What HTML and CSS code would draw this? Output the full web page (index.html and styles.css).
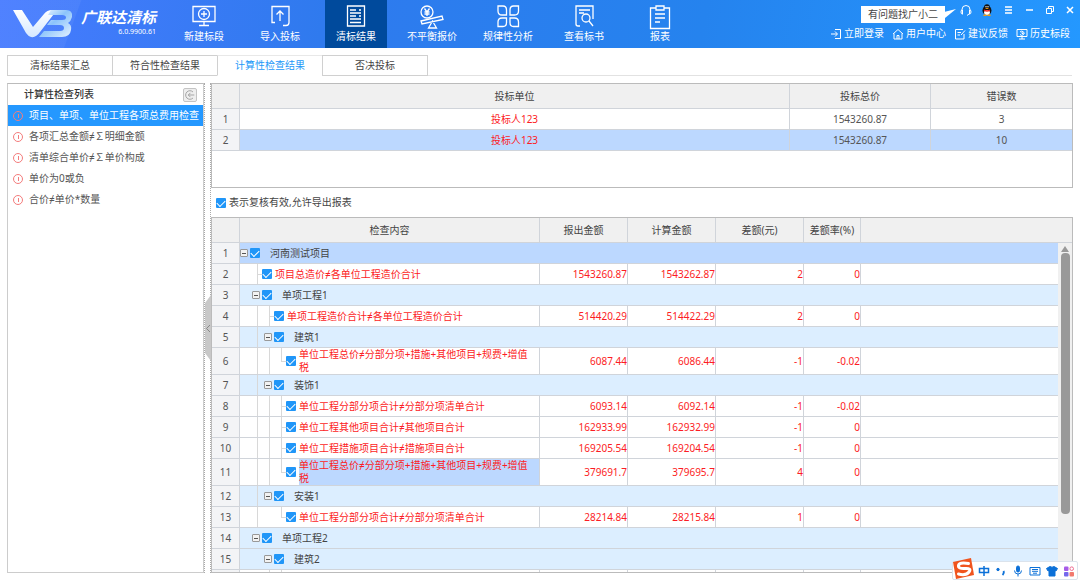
FILE: index.html
```html
<!DOCTYPE html>
<html lang="zh-CN">
<head>
<meta charset="utf-8">
<title>广联达清标</title>
<link rel="stylesheet" href="styles.css">
</head>
<body>
<div class="app">
  <header class="topbar">
    <div class="brand">
      <svg class="logo" viewBox="0 0 60 28" aria-hidden="true">
        <defs>
          <linearGradient id="lg1" x1="0" y1="0" x2="0" y2="1"><stop offset="0" stop-color="#fff"/><stop offset="1" stop-color="#d5e8ff"/></linearGradient>
          <linearGradient id="lg2" x1="0" y1="0" x2="1" y2="1"><stop offset="0" stop-color="#fff"/><stop offset=".45" stop-color="#8cc4fb"/><stop offset="1" stop-color="#e6f2ff"/></linearGradient>
        </defs>
        <path fill="url(#lg1)" d="M0 0h9l11 17L31 4q3-4 8-4h5L27 22q-4 6-9 5-3-1-5-4z"/>
        <path fill="url(#lg2)" d="M38 0h15q7 0 6 7-1 4-4 6 4 2 3 7-1 7-9 7H26l5-6h16q4 0 4-3t-4-3H34l4-5h11q4 0 4-2.500t-4-2.500H35z"/>
      </svg>
      <div class="brand-text">
        <strong class="brand-name">广联达清标</strong>
        <span class="version">6.0.9900.61</span>
      </div>
    </div>
    <nav class="nav">
      <button class="nav-item"><svg viewBox="0 0 26 26"><path d="M2 2.500h22v15H2zM13 17.500v4M8 21.500h10"/><circle cx="13" cy="10" r="5.500"/><path d="M13 7v6M10 10h6"/></svg>新建标段</button>
      <button class="nav-item"><svg viewBox="0 0 26 26"><path d="M8 18.500H5V2.500h17v16q0 3-3 3h-3M13 17V7M9.500 10.500L13 7l3.500 3.500"/></svg>导入投标</button>
      <button class="nav-item active"><svg viewBox="0 0 26 26"><path d="M4.500 2h17v20h-17zM7 6h6M7 9h11M7 12h6M7 15h11M7 18.500h11M16 6h2M16 12h2"/></svg>清标结果</button>
      <button class="nav-item"><svg viewBox="0 0 26 26"><circle cx="8" cy="8" r="6"/><path d="M5.500 4.500L8 8l2.500-3.500M8 8v4M5.500 8h5M5.500 10h5M2 17l21-5 1 3.500L3 20zM13.500 17l-4 7h8z"/></svg>不平衡报价</button>
      <button class="nav-item"><svg viewBox="0 0 26 26"><path d="M3 2h5q3.500 0 3.500 4v5H7q-4 0-4-4zM23.500 2h-5Q15 2 15 6v5h4.500q4 0 4-4zM3 22.500h5q3.500 0 3.500-4v-4.500H7q-4 0-4 4zM23.500 22.500h-5q-3.500 0-3.500-4v-4.500h4.500q4 0 4 4z"/></svg>规律性分析</button>
      <button class="nav-item"><svg viewBox="0 0 26 26"><path d="M9 22H7q-2 0-2-2V2h17v13M8 6h11M8 9h5"/><circle cx="15" cy="14" r="4"/><path d="M18 17l4 5"/></svg>查看标书</button>
      <button class="nav-item"><svg viewBox="0 0 26 26"><path d="M9 4H3.500v20.500h19V4H17M9 2h8v4H9zM8 10h10M8 14h10M8 18h5"/></svg>报表</button>
    </nav>
    <div class="tools">
      <div class="tools-row">
        <span class="bubble">有问题找广小二</span>
        <button class="tool" aria-label="客服"><svg viewBox="0 0 12 12"><path d="M2 7V5.500a4 4 0 0 1 8 0V7M2 6q-1 0-1 2t1.500 2.200V6zM10 6q1 0 1 2t-1.500 2.200V6zM9 10l-2 1.500"/></svg></button>
        <button class="tool" aria-label="QQ"><svg viewBox="0 0 12 12"><g stroke="none"><ellipse cx="6" cy="6.500" rx="4.500" ry="4.500" fill="#121212"/><ellipse cx="6" cy="3.500" rx="2.900" ry="3.300" fill="#121212"/><ellipse cx="6" cy="8.500" rx="2.900" ry="2.500" fill="#fff"/><path fill="#e22" d="M3 5.500q3 1.500 6 0v1.500q-3 1.500-6 0z"/><ellipse cx="4" cy="11.200" rx="2" ry=".8" fill="#f90"/><ellipse cx="8" cy="11.200" rx="2" ry=".8" fill="#f90"/><circle cx="5" cy="2.800" r=".7" fill="#fff"/><circle cx="7" cy="2.800" r=".7" fill="#fff"/><ellipse cx="6" cy="4.500" rx="1.700" ry=".6" fill="#f90"/></g></svg></button>
        <button class="tool" aria-label="菜单"><svg viewBox="0 0 12 12"><path stroke-width="1.500" d="M3 3h7M3 6h7M3 9h7"/></svg></button>
        <button class="tool" aria-label="最小化"><svg viewBox="0 0 12 12"><path stroke-width="1.500" d="M3 6h7"/></svg></button>
        <button class="tool" aria-label="还原"><svg viewBox="0 0 12 12"><path d="M2.500 4.500h5v5h-5zM4.500 4V2.500h5v5H8"/></svg></button>
        <button class="tool" aria-label="关闭"><svg viewBox="0 0 12 12"><path stroke-width="1.500" d="M2 3l6 6M8 3L2 9"/></svg></button>
      </div>
      <div class="tools-row links">
        <a href="#"><svg viewBox="0 0 12 12"><path d="M5 1.500h5.500v9H5M1 6h6M5 3.500L7.500 6 5 8.500"/></svg>立即登录</a>
        <a href="#"><svg viewBox="0 0 12 12"><path d="M1 6l5-4.500L11 6M2 5.500V11h8V5.500M5 11V7.500h2V11"/></svg>用户中心</a>
        <a href="#"><svg viewBox="0 0 12 12"><path d="M10 6v5H1.500V1.500H9M3.500 4.500H7M3.500 7H6M7 7l4-4.500"/></svg>建议反馈</a>
        <a href="#"><svg viewBox="0 0 12 12"><path d="M1 1.500h10v7H1zM3 11h6M6 8.500V11M4 4a2.300 2 0 1 1 0 2.500M6 4v1.500h1.500"/></svg>历史标段</a>
      </div>
    </div>
  </header>

  <div class="tabs">
    <button class="tab">清标结果汇总</button>
    <button class="tab">符合性检查结果</button>
    <button class="tab active">计算性检查结果</button>
    <button class="tab">否决投标</button>
  </div>

  <main class="workspace">
    <aside class="side">
      <div class="side-head">
        <h2>计算性检查列表</h2>
        <button class="collapse" aria-label="收起"><svg viewBox="0 0 14 14"><path d="M10.500 3.500a5 5 0 1 0 0 7M12 7H5M7.500 4.500L5 7l2.500 2.500"/></svg></button>
      </div>
      <ul class="checks">
        <li class="selected"><i class="warn"></i>项目、单项、单位工程各项总费用检查</li>
        <li><i class="warn"></i>各项汇总金额≠∑明细金额</li>
        <li><i class="warn"></i>清单综合单价≠∑单价构成</li>
        <li><i class="warn"></i>单价为0或负</li>
        <li><i class="warn"></i>合价≠单价*数量</li>
      </ul>
    </aside>
    <div class="splitter"><button class="grip" aria-label="折叠侧栏"><svg viewBox="0 0 6 66"><path fill="#c8c8c8" d="M6 0v66L0 58V8z"/><path fill="none" stroke="#888" d="M5 30L1.500 33.500 5 37"/></svg></button></div>

    <section class="content">
      <div class="panel bidders">
        <table class="grid">
          <colgroup><col class="c-num"><col><col class="c-total"><col class="c-total"></colgroup>
          <thead><tr><th></th><th>投标单位</th><th>投标总价</th><th>错误数</th></tr></thead>
          <tbody>
            <tr><th>1</th><td class="err">投标人123</td><td>1543260.87</td><td>3</td></tr>
            <tr class="current"><th>2</th><td class="err">投标人123</td><td>1543260.87</td><td>10</td></tr>
          </tbody>
        </table>
      </div>
      <label class="review"><input type="checkbox" checked>表示复核有效,允许导出报表</label>
      <div class="panel details">
        <table class="grid">
          <colgroup><col class="c-num"><col class="c-item"><col class="c-money"><col class="c-money"><col class="c-money"><col class="c-rate"><col></colgroup>
          <thead><tr><th></th><th>检查内容</th><th>报出金额</th><th>计算金额</th><th>差额(元)</th><th>差额率(%)</th><th></th></tr></thead>
          <tbody>
            <tr class="current"><th>1</th><td colspan="6"><div class="tree group"><button class="toggle" aria-label="折叠"></button><label><input type="checkbox" checked><span>河南测试项目</span></label></div></td></tr>
            <tr class="leaf"><th>2</th><td><div class="tree"><i class="gap"></i><i class="elbow on"></i><label><input type="checkbox" checked><span>项目总造价≠各单位工程造价合计</span></label></div></td><td>1543260.87</td><td>1543262.87</td><td>2</td><td>0</td><td></td></tr>
            <tr class="branch"><th>3</th><td colspan="6"><div class="tree group"><i class="gap"></i><button class="toggle" aria-label="折叠"></button><label><input type="checkbox" checked><span>单项工程1</span></label></div></td></tr>
            <tr class="leaf"><th>4</th><td><div class="tree"><i class="gap"></i><i class="gap line"></i><i class="elbow on"></i><label><input type="checkbox" checked><span>单项工程造价合计≠各单位工程造价合计</span></label></div></td><td>514420.29</td><td>514422.29</td><td>2</td><td>0</td><td></td></tr>
            <tr class="branch"><th>5</th><td colspan="6"><div class="tree group"><i class="gap"></i><i class="gap line"></i><button class="toggle" aria-label="折叠"></button><label><input type="checkbox" checked><span>建筑1</span></label></div></td></tr>
            <tr class="leaf"><th>6</th><td><div class="tree"><i class="gap"></i><i class="gap line"></i><i class="gap line"></i><i class="elbow"></i><label><input type="checkbox" checked><span>单位工程总价≠分部分项+措施+其他项目+规费+增值税</span></label></div></td><td>6087.44</td><td>6086.44</td><td>-1</td><td>-0.02</td><td></td></tr>
            <tr class="branch"><th>7</th><td colspan="6"><div class="tree group"><i class="gap"></i><i class="gap line"></i><button class="toggle" aria-label="折叠"></button><label><input type="checkbox" checked><span>装饰1</span></label></div></td></tr>
            <tr class="leaf"><th>8</th><td><div class="tree"><i class="gap"></i><i class="gap line"></i><i class="gap line"></i><i class="elbow on"></i><label><input type="checkbox" checked><span>单位工程分部分项合计≠分部分项清单合计</span></label></div></td><td>6093.14</td><td>6092.14</td><td>-1</td><td>-0.02</td><td></td></tr>
            <tr class="leaf"><th>9</th><td><div class="tree"><i class="gap"></i><i class="gap line"></i><i class="gap line"></i><i class="elbow on"></i><label><input type="checkbox" checked><span>单位工程其他项目合计≠其他项目合计</span></label></div></td><td>162933.99</td><td>162932.99</td><td>-1</td><td>0</td><td></td></tr>
            <tr class="leaf"><th>10</th><td><div class="tree"><i class="gap"></i><i class="gap line"></i><i class="gap line"></i><i class="elbow on"></i><label><input type="checkbox" checked><span>单位工程措施项目合计≠措施项目合计</span></label></div></td><td>169205.54</td><td>169204.54</td><td>-1</td><td>0</td><td></td></tr>
            <tr class="leaf"><th>11</th><td><div class="tree"><i class="gap"></i><i class="gap line"></i><i class="gap line"></i><i class="elbow"></i><label><input type="checkbox" checked><span class="focus">单位工程总价≠分部分项+措施+其他项目+规费+增值税</span></label></div></td><td>379691.7</td><td>379695.7</td><td>4</td><td>0</td><td></td></tr>
            <tr class="branch"><th>12</th><td colspan="6"><div class="tree group"><i class="gap"></i><i class="gap line"></i><button class="toggle" aria-label="折叠"></button><label><input type="checkbox" checked><span>安装1</span></label></div></td></tr>
            <tr class="leaf"><th>13</th><td><div class="tree"><i class="gap"></i><i class="gap line"></i><i class="gap"></i><i class="elbow"></i><label><input type="checkbox" checked><span>单位工程分部分项合计≠分部分项清单合计</span></label></div></td><td>28214.84</td><td>28215.84</td><td>1</td><td>0</td><td></td></tr>
            <tr class="branch"><th>14</th><td colspan="6"><div class="tree group"><i class="gap"></i><button class="toggle" aria-label="折叠"></button><label><input type="checkbox" checked><span>单项工程2</span></label></div></td></tr>
            <tr class="branch"><th>15</th><td colspan="6"><div class="tree group"><i class="gap"></i><i class="gap"></i><button class="toggle" aria-label="折叠"></button><label><input type="checkbox" checked><span>建筑2</span></label></div></td></tr>
            <tr class="leaf"><th></th><td><div class="tree"><i class="gap"></i><i class="gap"></i><i class="gap line"></i><i class="elbow on"></i></div></td><td></td><td></td><td></td><td></td><td></td></tr>
          </tbody>
        </table>
        <div class="scrollbar"><i class="arrow"></i><i class="thumb"></i></div>
      </div>
    </section>
  </main>

  <div class="ime">
    <svg class="ime-logo" viewBox="0 0 22 22"><path fill="#f0541e" d="M1 4L19 0l3 17L4 21z"/><path fill="none" stroke="#fff" stroke-width="3" stroke-linecap="round" d="M16.500 5.500Q7 4 6.500 7.500T13 10.500t4 3.500T6.500 16"/></svg>
    <svg viewBox="0 0 12 12"><path stroke-width="1.500" d="M1.500 3.500h9v4h-9zM6 1v10"/></svg>
    <svg viewBox="0 0 12 12"><circle cx="3" cy="4.500" r="1.200" fill="#0b70d8"/><path stroke-width="1.800" d="M8.500 6q1 2-1 4"/></svg>
    <svg viewBox="0 0 12 12"><rect x="4.500" y="1" width="3" height="6" rx="1.500" fill="#0b70d8"/><path d="M2.500 5.500q0 3.500 3.500 3.500t3.500-3.500M6 9v2.500"/></svg>
    <svg viewBox="0 0 12 12"><path d="M1 2.500h10v7.500H1zM3 4.500h6M3 6.300h6M4 8.200h4"/></svg>
    <svg viewBox="0 0 12 12"><path fill="#0b70d8" d="M4 1.500q2 1.500 4 0l3.500 2L10 6l-1-.5V11H3V5.500L2 6 .5 3.500z"/></svg>
    <svg viewBox="0 0 12 12"><g stroke="none"><rect x="1" y="1.500" width="4.500" height="4.500" rx="1" fill="#a65be8"/><rect x="1" y="7" width="4.500" height="4.500" rx="1" fill="#7467ec"/><rect x="6.500" y="7" width="4.500" height="4.500" rx="1" fill="#f27a6e"/></g><circle cx="8.700" cy="3.700" r="1.800" stroke="#ef6d92"/></svg>
  </div>
</div>
</body>
</html>
```
FILE: styles.css
```css
* { box-sizing: border-box; }

body {
  margin: 0;
  background: #fff;
  color: #555;
  font: 10px/13px "Noto Sans", "Noto Sans CJK SC", sans-serif;
}

button {
  margin: 0;
  padding: 0;
  border: 0;
  background: none;
  color: inherit;
  font: inherit;
}

svg {
  display: block;
  flex: none;
}

.app {
  display: flex;
  flex-direction: column;
  height: 100vh;
}

/* Top bar */
.topbar {
  display: flex;
  flex: none;
  height: 48px;
  color: #fff;
  background:
    linear-gradient(110deg, rgba(255, 255, 255, 0.05) 76px, transparent 77px),
    linear-gradient(100deg, #477bff 0%, #2f7aee 30%, #2583ee 65%, #2498ff 100%);
}

.topbar svg,
.ime svg {
  fill: none;
  stroke: currentColor;
}

.brand {
  display: flex;
  flex: none;
  gap: 8px;
  width: 173px;
  padding: 10px 0 0 13px;
}

.topbar .logo {
  width: 60px;
  height: 28px;
  stroke: none;
}

.brand-text {
  display: flex;
  flex-direction: column;
  align-items: flex-end;
}

.brand-name {
  font-size: 15px;
  line-height: 15px;
  font-style: italic;
}

.version {
  font-size: 7px;
}

.nav {
  display: flex;
  gap: 14px;
}

.nav-item {
  display: flex;
  flex-direction: column;
  align-items: center;
  width: 62px;
  padding-top: 4px;
  white-space: nowrap;
}

.nav-item svg {
  width: 26px;
  height: 26px;
  stroke-width: 1.3;
}

.nav-item.active {
  background: #004a9c;
}

.tools {
  display: flex;
  flex-direction: column;
  align-items: flex-end;
  gap: 4px;
  margin-left: auto;
  padding: 6px 10px 0 0;
}

.tools-row {
  display: flex;
  gap: 9px;
}

.tools-row.links {
  gap: 8px;
}

.tool svg,
.links svg {
  width: 12px;
  height: 12px;
}

.tools-row:first-child {
  margin-right: -7px;
  height: 17px;
}

.tool {
  height: 8px;
  display: flex;
  align-items: center;
}

.bubble {
  position: relative;
  width: 84px;
  margin-right: 6px;
  background: #fff;
  color: #444;
  line-height: 17px;
  text-align: center;
}

.bubble::after {
  content: "";
  position: absolute;
  left: 100%;
  top: 3px;
  width: 11px;
  height: 9px;
  background: #fff;
  clip-path: polygon(0 30%, 100% 0, 0 100%);
}

.links a {
  display: flex;
  align-items: center;
  gap: 2px;
  color: #fff;
  text-decoration: none;
}

/* Tabs */
.tabs {
  display: flex;
  flex: none;
  margin: 7px 8px 0 7px;
  border-bottom: 1px solid #e2e2e2;
}

.tab {
  width: 106px;
  height: 21px;
  margin: 0 0 -1px -1px;
  border: 1px solid #d0d0d0;
  background: #fff;
  color: #444;
}

.tab:first-child {
  margin-left: 0;
}

.tab.active {
  border-color: #e8e8e8 #d0d0d0 #fff;
  color: #2498f8;
}

/* Workspace */
.workspace {
  display: flex;
  flex: 1;
  min-height: 0;
  margin: 7px;
}

.side {
  flex: none;
  width: 197px;
  border: 1px solid #ccc;
  border-top-color: #bbb;
}

.side-head {
  display: flex;
  align-items: center;
  justify-content: space-between;
  height: 21px;
  padding: 0 6px 0 16px;
}

.side-head h2 {
  margin: 0;
  color: #333;
  font-size: 10px;
  font-weight: 500;
}

.collapse {
  width: 14px;
  height: 14px;
  border: 1px solid #c4c4c4;
  border-radius: 2px;
  background: #eee;
}

.collapse svg {
  width: 12px;
  height: 12px;
  fill: none;
  stroke: #999;
}

.checks {
  margin: 0;
  padding: 0;
  list-style: none;
}

.checks li {
  display: flex;
  align-items: center;
  gap: 6px;
  height: 21px;
  padding-left: 5px;
  white-space: nowrap;
}

.checks .selected {
  background: #2498ff;
  color: #fff;
}

.warn {
  display: flex;
  justify-content: center;
  width: 10px;
  height: 10px;
  border: 1px solid #f47c7c;
  border-radius: 50%;
}

.warn::before {
  content: "";
  width: 1px;
  height: 4px;
  margin-top: 2px;
  background: #f47c7c;
}

.splitter {
  display: flex;
  flex: none;
  align-items: center;
  width: 7px;
  border-left: 1px dotted #aaa;
  border-right: 1px dotted #aaa;
}

.grip svg {
  width: 6px;
  height: 66px;
}

.content {
  display: flex;
  flex: 1;
  flex-direction: column;
  min-width: 0;
}

.panel {
  border: 1px solid #bbb;
  overflow: hidden;
}

.bidders {
  flex: none;
  height: 105px;
}

.details {
  position: relative;
  flex: 1;
  min-height: 0;
}

.review {
  display: flex;
  flex: none;
  align-items: center;
  gap: 3px;
  height: 29px;
  padding-left: 5px;
  color: #444;
}

input[type="checkbox"] {
  appearance: none;
  display: flex;
  flex: none;
  justify-content: center;
  width: 10px;
  height: 10px;
  margin: 0;
  border-radius: 1px;
  background: #2096f8;
}

input[type="checkbox"]:checked::before {
  content: "";
  width: 7px;
  height: 4px;
  margin-top: 2px;
  border: solid #fff;
  border-width: 0 0 1px 1px;
  transform: rotate(-45deg);
}

/* Data grids */
.grid {
  width: 100%;
  border-spacing: 0;
  table-layout: fixed;
}

.c-num { width: 28px; }
.c-total { width: 141px; }
.c-item { width: 300px; }
.c-money { width: 88px; }
.c-rate { width: 57px; }

.grid th,
.grid td {
  padding: 0;
  border: solid #d0d4da;
  border-width: 0 1px 1px 0;
  text-align: center;
}

.grid th {
  font-weight: 400;
}

.grid tr > :last-child {
  border-right: 0;
}

.grid thead tr {
  height: 25px;
}

.grid thead th {
  background: #f0f0f0;
  color: #444;
}

.grid tbody tr {
  height: 21px;
}

.grid tbody th {
  background: #f3f4f6;
}

.grid .err,
.grid .leaf td {
  color: #fc1c24;
}

.grid .leaf td {
  text-align: right;
}

.current td {
  background: #bcd8ff;
}

.branch td {
  background: #dceeff;
}

.tree {
  display: flex;
  min-height: 20px;
  text-align: left;
}

.tree label {
  display: flex;
  flex: 1;
  align-items: center;
  gap: 3px;
}

.tree label span {
  flex: 1;
  padding-right: 4px;
}

.tree.group label {
  gap: 10px;
  color: #444;
}

.focus {
  background: #bcd8ff;
}

.gap,
.elbow {
  flex: none;
  width: 12px;
}

.line {
  background: linear-gradient(#d8d8d8, #d8d8d8) 5px 0 / 1px 100% no-repeat;
}

.elbow {
  width: 10px;
  background:
    linear-gradient(#d8d8d8, #d8d8d8) 5px 0 / 1px 50% no-repeat,
    linear-gradient(#d8d8d8, #d8d8d8) 5px 50% / 5px 1px no-repeat;
}

.elbow.on {
  background:
    linear-gradient(#d8d8d8, #d8d8d8) 5px 0 / 1px 100% no-repeat,
    linear-gradient(#d8d8d8, #d8d8d8) 5px 50% / 5px 1px no-repeat;
}

.toggle {
  flex: none;
  align-self: center;
  width: 8px;
  height: 8px;
  margin-right: 2px;
  border: 1px solid #999;
  border-radius: 1px;
  background: linear-gradient(#555, #555) center / 4px 1px no-repeat #f2f2f2;
}

.scrollbar {
  position: absolute;
  top: 25px;
  right: 0;
  bottom: 0;
  display: flex;
  flex-direction: column;
  align-items: center;
  gap: 1px;
  width: 14px;
  padding-top: 3px;
  background: #f0f0f0;
}

.arrow {
  border: 4px solid transparent;
  border-top: 0;
  border-bottom: 6px solid #999;
}

.thumb {
  width: 9px;
  height: 80%;
  border-radius: 4px;
  background: #999;
}

/* Input method bar */
.ime {
  position: absolute;
  right: 2px;
  bottom: 0;
  display: flex;
  align-items: center;
  gap: 5px;
  height: 19px;
  padding: 0 2px 0 25px;
  border: 1px solid #dbe3ec;
  border-radius: 2px;
  background: #fff;
  color: #0b70d8;
}

.ime svg {
  width: 12px;
  height: 12px;
}

.ime .ime-logo {
  position: absolute;
  left: -1px;
  bottom: -1px;
  width: 22px;
  height: 22px;
  stroke: none;
}
```
